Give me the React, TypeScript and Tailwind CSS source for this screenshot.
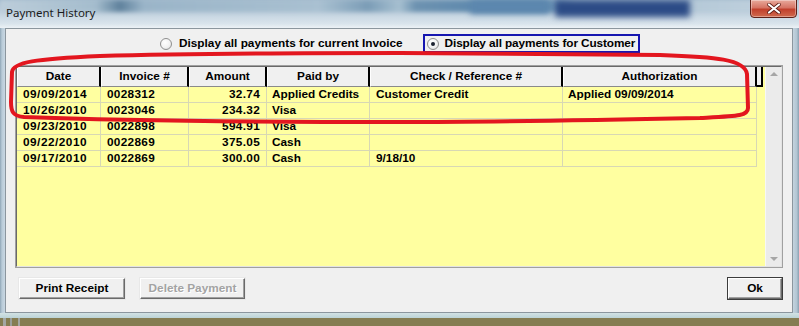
import React from 'react';

const rows = [
  { date: '09/09/2014', invoice: '0028312', amount: '32.74', paidBy: 'Applied Credits', reference: 'Customer Credit', auth: 'Applied 09/09/2014' },
  { date: '10/26/2010', invoice: '0023046', amount: '234.32', paidBy: 'Visa', reference: '', auth: '' },
  { date: '09/23/2010', invoice: '0022898', amount: '594.91', paidBy: 'Visa', reference: '', auth: '' },
  { date: '09/22/2010', invoice: '0022869', amount: '375.05', paidBy: 'Cash', reference: '', auth: '' },
  { date: '09/17/2010', invoice: '0022869', amount: '300.00', paidBy: 'Cash', reference: '9/18/10', auth: '' },
];

const columns = [
  { label: 'Date', width: 'w-[84px]' },
  { label: 'Invoice #', width: 'w-[88px]' },
  { label: 'Amount', width: 'w-[78px]' },
  { label: 'Paid by', width: 'w-[103px]' },
  { label: 'Check / Reference #', width: 'w-[193px]' },
  { label: 'Authorization', width: 'w-[194px]' },
];

function Radio({ checked }: { checked?: boolean }) {
  return (
    <span className="flex h-[12px] w-[12px] shrink-0 items-center justify-center rounded-full border border-[#8f8f8f] bg-[radial-gradient(circle_at_40%_35%,#ffffff_0%,#f2f2f2_55%,#d6d6d6_100%)]">
      {checked && <span className="h-[4px] w-[4px] rounded-full bg-[#1c2230]" />}
    </span>
  );
}

function WinButton({ label, disabled, isDefault, width }: { label: string; disabled?: boolean; isDefault?: boolean; width: string }) {
  return (
    <div className={`${width} h-[23px] ${isDefault ? 'border border-[#3c3c3c]' : 'border border-[#e8e8e8]'}`}>
      <div className="flex h-full w-full items-center justify-center border border-t-white border-l-white border-r-[#6a6a6a] border-b-[#6a6a6a] bg-[#f0f0f0] shadow-[inset_-1px_-1px_0_#a0a0a0]">
        <span className={`whitespace-nowrap text-[11.8px] font-bold ${disabled ? 'text-[#a3a3a3] [text-shadow:1px_1px_0_#ffffff]' : 'text-black'}`}>
          {label}
        </span>
      </div>
    </div>
  );
}

export default function App() {
  return (
    <div className="relative flex h-[326px] w-[799px] flex-col overflow-hidden whitespace-nowrap bg-[#857d52] font-['Liberation_Sans',Arial,sans-serif]">
      {/* Title bar */}
      <div className="relative h-[28px] w-full overflow-hidden bg-[linear-gradient(180deg,#a3bbcd_0%,#c2d2df_45%,#d9e4ec_85%,#ecf2f6_100%)]">
        <div className="absolute left-0 top-0 h-[12px] w-full bg-[linear-gradient(90deg,#bccdda_0%,#a4bccd_12%,#5f819c_15%,#9ab4c8_18%,#a9c0d1_40%,#7b9cb6_46%,#a6bfd0_50%,#6d92b0_52%,#5a86ad_62%,#5a86ad_68%,#a6bed0_72%,#c3d3df_100%)] blur-[2px]" />
        <div className="absolute left-[555px] top-0 h-[17px] w-[135px] bg-[#2c4b86] blur-[3px]" />
        <div className="absolute left-[470px] top-0 h-[14px] w-[80px] bg-[#5c87ae] blur-[3px]" />
        <span className="absolute left-[6px] top-[5px] font-['Noto_Sans',sans-serif] text-[11.5px] leading-[16px] text-[#1b1b1b]">
          Payment History
        </span>
        <div className="absolute left-[750px] top-[-1px] flex h-[19px] w-[47px] items-center justify-center rounded-b-[4px] border border-[#5e2118] bg-[linear-gradient(180deg,#e8aa9c_0%,#d67464_45%,#c1402c_55%,#d06a4e_100%)] shadow-[inset_0_0_0_1px_rgba(255,255,255,0.35)]">
          <svg width="14" height="11" viewBox="0 0 14 11">
            <path d="M2 1.5 L12 9.5 M12 1.5 L2 9.5" stroke="#5a1a12" strokeWidth="3.6" strokeLinecap="round" />
            <path d="M2 1.5 L12 9.5 M12 1.5 L2 9.5" stroke="#ffffff" strokeWidth="2.2" strokeLinecap="round" />
          </svg>
        </div>
      </div>

      {/* Frame + client */}
      <div className="flex h-[285px] w-full">
        <div className="h-full w-[5px] bg-[linear-gradient(90deg,#8fa6b6_0%,#b9cbd8_40%,#c9d7e2_100%)]" />
        <div className="flex h-full w-[788px] flex-col border border-[#8b969e] bg-[#f0f0f0]">
          {/* Radio options */}
          <div className="mt-[5px] flex h-[19px] items-center text-[11.8px] font-bold text-black">
            <div className="ml-[154px] flex items-center">
              <Radio />
              <span className="ml-[7px]">Display all payments for current Invoice</span>
            </div>
            <div className="ml-[20px] flex h-[19px] w-[217px] items-center overflow-hidden border-2 border-[#1616b0] pl-[2px]">
              <Radio checked />
              <span className="ml-[6px] tracking-[-0.1px]">Display all payments for Customer</span>
            </div>
          </div>

          {/* Grid */}
          <div className="mx-[9px] mt-[12px] h-[203px] border border-[#a0a0a0]">
            <div className="flex h-full w-full border border-t-[#696969] border-l-[#696969] border-r-[#e3e3e3] border-b-[#e3e3e3]">
              <div className="flex h-full w-[748px] flex-col bg-[#ffffa0]">
                {/* Header */}
                <div className="flex h-[20px] bg-[#f0f0f0]">
                  {columns.map((col) => (
                    <div
                      key={col.label}
                      className={`${col.width} flex h-full items-center justify-center border-b border-b-[#8a8a8a] border-l border-l-white border-r-2 border-r-black text-[11.8px] font-bold text-black`}
                    >
                      {col.label}
                    </div>
                  ))}
                  <div className="h-full w-[6px] border-b-2 border-r-2 border-black bg-[#f0f0f0]" />
                  <div className="h-full w-[2px] bg-[#ffffa0]" />
                </div>

                {/* Rows */}
                {rows.map((row, i) => (
                  <div key={i} className="flex h-[16px] text-[11.8px] font-bold leading-[15px] text-black">
                    <div className="w-[84px] border-b border-r border-[#d8d8b4] pl-[6px] tracking-[0.5px]">{row.date}</div>
                    <div className="w-[88px] border-b border-r border-[#d8d8b4] pl-[6px] tracking-[0.3px]">{row.invoice}</div>
                    <div className="w-[78px] border-b border-r border-[#d8d8b4] pr-[6px] text-right tracking-[0.3px]">{row.amount}</div>
                    <div className="w-[103px] border-b border-r border-[#d8d8b4] pl-[5px]">{row.paidBy}</div>
                    <div className="w-[193px] border-b border-r border-[#d8d8b4] pl-[6px]">{row.reference}</div>
                    <div className="w-[194px] border-b border-r border-[#d8d8b4] pl-[5px]">{row.auth}</div>
                  </div>
                ))}
              </div>

              {/* Scrollbar */}
              <div className="flex h-full w-[16px] flex-col items-center justify-between border-l border-[#f7f7f7] bg-[#ebebeb] py-[5px]">
                <span className="h-0 w-0 border-x-[4px] border-b-[4px] border-x-transparent border-b-[#a6a6a6]" />
                <span className="h-0 w-0 border-x-[4px] border-t-[4px] border-x-transparent border-t-[#a6a6a6]" />
              </div>
            </div>
          </div>

          {/* Buttons */}
          <div className="mt-[9px] flex h-[23px] items-start">
            <div className="ml-[12px]">
              <WinButton label="Print Receipt" width="w-[108px]" />
            </div>
            <div className="ml-[13px]">
              <WinButton label="Delete Payment" width="w-[107px]" disabled />
            </div>
            <div className="ml-auto mr-[9px]">
              <WinButton label="Ok" width="w-[56px]" isDefault />
            </div>
          </div>
        </div>
        <div className="h-full w-[6px] bg-[linear-gradient(90deg,#c4d3de_0%,#b3c6d3_60%,#8aa1b2_100%)]" />
      </div>

      {/* Bottom frame */}
      <div className="h-[5px] w-full bg-[linear-gradient(180deg,#d2e2e4_0%,#bcd3d6_100%)]" />
      <div className="flex h-[8px] w-full bg-[#857d52]">
        <div className="ml-[3px] h-full w-[3px] bg-[#a3a7a3]" />
        <div className="ml-[4px] h-full w-[2px] bg-[#9a9e9a]" />
        <div className="ml-[6px] h-full w-[2px] bg-[#a3a7a3]" />
      </div>

      {/* Red annotation */}
      <svg className="pointer-events-none absolute left-0 top-0" width="799" height="326" viewBox="0 0 799 326">
        <path
          d="M12 72 C13 62 35 59 100 56 C200 53 320 53 400 53 L660 55 C715 57 745 59 747 74 L748 108 C748 116 738 116 700 118 C600 120 500 122 400 122 C250 122 100 120 24 117 C13 116 11 112 11 102 Z"
          fill="none"
          stroke="#e3161f"
          strokeWidth="4"
          strokeLinejoin="round"
        />
      </svg>
    </div>
  );
}
